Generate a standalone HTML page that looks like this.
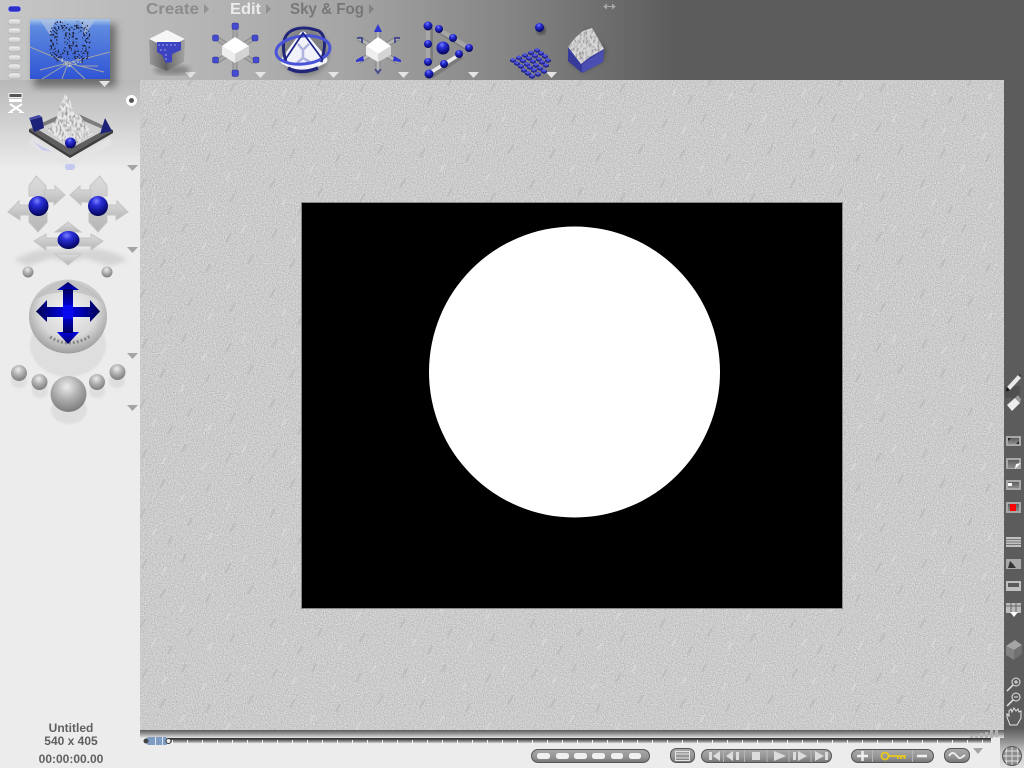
<!DOCTYPE html>
<html><head><meta charset="utf-8"><style>
html,body{margin:0;padding:0;width:1024px;height:768px;overflow:hidden;background:#ececec}
svg{position:absolute;left:0;top:0;display:block;overflow:hidden}
text{font-family:"Liberation Sans",sans-serif;font-weight:bold}
</style></head><body>
<svg width="1024" height="768" viewBox="0 0 1024 768" xmlns="http://www.w3.org/2000/svg">
<defs>
<linearGradient id="top" x1="0" x2="1" y1="0" y2="0"><stop offset="0" stop-color="#c6c6c6"/><stop offset=".2" stop-color="#b4b4b4"/><stop offset=".33" stop-color="#a6a6a6"/><stop offset=".5" stop-color="#848484"/><stop offset=".66" stop-color="#5c5c5c"/><stop offset="1" stop-color="#5c5c5c"/></linearGradient>
<linearGradient id="lt" x1="0" x2="0" y1="0" y2="1"><stop offset="0" stop-color="#b8b8b8"/><stop offset="1" stop-color="#ececec"/></linearGradient>
<linearGradient id="thumb" x1="0" x2="0" y1="0" y2="1"><stop offset="0" stop-color="#a9c7ec"/><stop offset=".12" stop-color="#5f8ae0"/><stop offset="1" stop-color="#3055d4"/></linearGradient>
<linearGradient id="pill" x1="0" x2="0" y1="0" y2="1"><stop offset="0" stop-color="#f4f4f4"/><stop offset="1" stop-color="#c4c4c4"/></linearGradient>
<linearGradient id="bshadow" x1="0" x2="0" y1="0" y2="1"><stop offset="0" stop-color="#5c5c5c"/><stop offset=".5" stop-color="#9a9a9a"/><stop offset="1" stop-color="#e4e4e4"/></linearGradient>
<linearGradient id="corner" x1="0" x2="0" y1="0" y2="1"><stop offset="0" stop-color="#5c5c5c"/><stop offset=".3" stop-color="#8c8c8c"/><stop offset=".65" stop-color="#d0d0d0"/><stop offset="1" stop-color="#e0e0e0"/></linearGradient>
<linearGradient id="track" x1="0" x2="0" y1="0" y2="1"><stop offset="0" stop-color="#2c2c2c"/><stop offset=".3" stop-color="#555"/><stop offset=".75" stop-color="#bbb"/><stop offset="1" stop-color="#fff"/></linearGradient>
<linearGradient id="btn" x1="0" x2="0" y1="0" y2="1"><stop offset="0" stop-color="#a8a8a8"/><stop offset=".6" stop-color="#949494"/><stop offset="1" stop-color="#747474"/></linearGradient>
<linearGradient id="cross" x1="0" x2="0" y1="0" y2="1"><stop offset="0" stop-color="#000060"/><stop offset=".5" stop-color="#0000f0"/><stop offset="1" stop-color="#000060"/></linearGradient>
<linearGradient id="crossH" x1="0" x2="1" y1="0" y2="0"><stop offset="0" stop-color="#000050"/><stop offset=".5" stop-color="#0000f0"/><stop offset="1" stop-color="#000050"/></linearGradient>
<linearGradient id="arrow" x1="0" x2="0" y1="0" y2="1"><stop offset="0" stop-color="#dcdcdc"/><stop offset="1" stop-color="#b6b6b6"/></linearGradient>
<linearGradient id="tile" x1="0" x2="0" y1="0" y2="1"><stop offset="0" stop-color="#5e5e5e"/><stop offset="1" stop-color="#8c8c8c"/></linearGradient>
<linearGradient id="cubeL" x1="0" x2="1" y1="0" y2="0"><stop offset="0" stop-color="#9a9a9a"/><stop offset="1" stop-color="#5e5e5e"/></linearGradient>
<linearGradient id="cubeR" x1="0" x2="1" y1="0" y2="0"><stop offset="0" stop-color="#6a6a6a"/><stop offset="1" stop-color="#a4a4a4"/></linearGradient>
<radialGradient id="bb" cx=".42" cy=".25" r=".8"><stop offset="0" stop-color="#7a80ff"/><stop offset=".3" stop-color="#2a30d8"/><stop offset=".75" stop-color="#0c0e80"/><stop offset="1" stop-color="#050540"/></radialGradient>
<radialGradient id="sb" cx=".45" cy=".3" r=".75"><stop offset="0" stop-color="#ececec"/><stop offset=".45" stop-color="#b0b0b0"/><stop offset="1" stop-color="#747474"/></radialGradient>
<radialGradient id="big" cx=".5" cy=".42" r=".62"><stop offset="0" stop-color="#f2f2f2"/><stop offset=".6" stop-color="#d8d8d8"/><stop offset=".88" stop-color="#a8a8a8"/><stop offset="1" stop-color="#8c8c8c"/></radialGradient>
<filter id="tex" x="0" y="0" width="100%" height="100%" color-interpolation-filters="sRGB"><feTurbulence type="fractalNoise" baseFrequency=".9" numOctaves="1" seed="4"/><feColorMatrix values=".35 0 0 0 .62  .35 0 0 0 .62  .35 0 0 0 .62  0 0 0 0 1"/></filter>
<pattern id="streaks" width="130" height="110" patternUnits="userSpaceOnUse">
<g stroke-width="2" fill="none" stroke="#b9b9b9">
<path d="M12 18l5-9M52 12l4-8M96 22l5-9M30 48l5-9M76 52l4-8M118 44l5-9M10 78l5-9M58 86l4-8M100 92l5-9M38 104l4-8"/>
</g>
<g stroke-width="2" fill="none" stroke="#d9d9d9">
<path d="M32 24l4-7M72 30l4-7M112 12l4-7M50 62l4-7M96 70l4-7M22 96l4-7M78 100l4-7"/>
</g>
</pattern>
<filter id="dots" x="-10%" y="-10%" width="120%" height="120%" color-interpolation-filters="sRGB"><feTurbulence type="fractalNoise" baseFrequency=".55" numOctaves="1" seed="3"/><feColorMatrix values="0 0 0 0 0  0 0 0 0 0  0 0 0 0 0  14 0 0 0 -7.500" result="m"/><feComposite in="SourceGraphic" in2="m" operator="in"/></filter>
<filter id="terr" x="0" y="0" width="100%" height="100%" color-interpolation-filters="sRGB"><feTurbulence type="fractalNoise" baseFrequency=".5 .25" numOctaves="2" seed="6"/><feColorMatrix values="0 0 0 0 .5  0 0 0 0 .5  0 0 0 0 .5  2.400 0 0 0 -1.050" result="n"/><feComposite in="n" in2="SourceAlpha" operator="in" result="c"/><feMerge><feMergeNode in="SourceGraphic"/><feMergeNode in="c"/></feMerge></filter>
<filter id="s"><feGaussianBlur stdDeviation=".35"/></filter>
<filter id="b1"><feGaussianBlur stdDeviation="1"/></filter>
<filter id="b2"><feGaussianBlur stdDeviation="2.5"/></filter>
<filter id="b4"><feGaussianBlur stdDeviation="4"/></filter>
<g id="t"><path d="M0 1.500L3 0 6 1.500V3.500L3 5 0 3.500Z" fill="#26298c"/><path d="M0 1.500L3 0 6 1.500 3 3Z" fill="#5258e4"/></g>
</defs>

<!-- base areas -->
<rect width="1024" height="768" fill="#ececec"/>
<rect width="1024" height="80" fill="url(#top)"/>
<rect x="0" y="80" width="140" height="90" fill="url(#lt)"/>
<rect x="1004" y="80" width="20" height="650" fill="#5c5c5c"/>
<rect x="1000" y="728" width="24" height="40" fill="url(#corner)"/>
<rect x="140" y="730" width="864" height="8" fill="url(#bshadow)"/>

<!-- workspace -->
<rect x="140" y="80" width="864" height="650" filter="url(#tex)"/>
<rect x="140" y="80" width="864" height="650" fill="url(#streaks)" opacity=".8"/>

<!-- canvas -->
<rect x="301.500" y="202.500" width="541" height="406" fill="#000" stroke="#888" stroke-width="1"/>
<circle cx="574.500" cy="372" r="145.500" fill="#fff"/>

<!-- top-menu -->
<g font-size="16">
<text x="146" y="14" fill="#8c8c8c" textLength="53" lengthAdjust="spacingAndGlyphs" filter="url(#s)">Create</text><path d="M204 4l5 5-5 5z" fill="#929292"/>
<text x="230" y="14" fill="#ececec" textLength="31" lengthAdjust="spacingAndGlyphs">Edit</text><path d="M266 4l5 5-5 5z" fill="#8e8e8e"/>
<text x="290" y="14" fill="#777" textLength="74" lengthAdjust="spacingAndGlyphs" filter="url(#s)">Sky &amp; Fog</text><path d="M369 4l5 5-5 5z" fill="#828282"/>
</g>
<path d="M604 6.500h11M604 6.500l2.500-2v4zM615 6.500l-2.500-2v4z" stroke="#a8a8a8" stroke-width="1" fill="#a8a8a8"/>

<!-- left pills -->
<rect x="8" y="6" width="13" height="6" rx="3" fill="#2a30c8" stroke="#dfe0ff" stroke-width=".5"/>
<g fill="url(#pill)" stroke="#999" stroke-width=".4">
<rect x="8" y="19" width="13" height="6" rx="3"/><rect x="8" y="28" width="13" height="6" rx="3"/><rect x="8" y="37" width="13" height="6" rx="3"/><rect x="8" y="46" width="13" height="6" rx="3"/><rect x="8" y="55" width="13" height="6" rx="3"/><rect x="8" y="64" width="13" height="6" rx="3"/><rect x="8" y="73" width="13" height="6" rx="3"/>
</g>

<!-- preview thumb -->
<rect x="34" y="24" width="82" height="63" fill="#444" opacity=".65" filter="url(#b4)"/>
<rect x="30" y="19" width="80" height="60" fill="url(#thumb)"/>
<path d="M40 20l10 15 5-15zM95 20l-10 15-5-15z" fill="#b4c4e0" opacity=".65"/>
<path d="M30 47L68 63 110 52M68 63L42 79M68 63L62 79M68 63L85 79M68 63L104 72M68 63L40 70M78 66L98 66" stroke="#a0a4a8" stroke-width="1" fill="none"/>
<g fill="none" filter="url(#dots)">
<ellipse cx="61" cy="42" rx="8" ry="17" stroke="#20243c" stroke-width="9"/>
<ellipse cx="80" cy="42" rx="7" ry="17" stroke="#20243c" stroke-width="9"/>
<path d="M60 60Q70 68 80 60" stroke="#c0c0c0" stroke-width="6"/>
</g>

<!-- small triangles -->
<g fill="#e4e4e4">
<path d="M99 81h11l-5.500 6z"/><path d="M185 72h11l-5.500 6z"/><path d="M255 72h11l-5.500 6z"/><path d="M328 72h11l-5.500 6z"/><path d="M398 72h11l-5.500 6z"/><path d="M468 72h11l-5.500 6z"/><path d="M546 72h11l-5.500 6z"/>
</g>
<g fill="#a4a4a4">
<path d="M127 165h11l-5.500 6z"/><path d="M127 247h11l-5.500 6z"/><path d="M127 353h11l-5.500 6z"/><path d="M127 405h11l-5.500 6z"/>
<path d="M973 748h10l-5 6z"/>
</g>

<!-- top icon 1: cube -->
<ellipse cx="172" cy="70" rx="18" ry="5" fill="#555" opacity=".5" filter="url(#b2)"/>
<g filter="url(#s)">
<path d="M149 39L167 30 185 39 167 48Z" fill="#f6f6f6"/>
<path d="M149 39L167 48V71L150 64Z" fill="url(#cubeL)"/>
<path d="M167 48L185 39 184 62 167 71Z" fill="url(#cubeR)"/>
<path d="M157 42H181V50L172 54V62L166 63 162 55 157 52Z" fill="#3c42c0"/>
<path d="M158 45h20M160 50h8M166 54v6" stroke="#8b90e0" stroke-width="1.300" stroke-dasharray="2 2"/>
</g>

<!-- top icon 2: move cube -->
<g filter="url(#s)">
<g stroke="#707070" stroke-width="5" opacity=".6"><path d="M235 26V72M216 38L254 62M254 38L216 62"/></g>
<g stroke="#a8a8a8" stroke-width="3"><path d="M235 26V72M216 38L254 62M254 38L216 62"/></g>
<path d="M222 46L235 37 249 46 235 54Z" fill="#fff"/>
<path d="M222 46L235 54V63L222 55Z" fill="#eee"/>
<path d="M249 46L235 54V63L249 55Z" fill="#d4d4d4"/>
<g fill="#454bd0" stroke="#2a2e90" stroke-width=".5">
<rect x="232" y="23" width="6.500" height="6.500" rx="1.500"/><rect x="232" y="70" width="6.500" height="6.500" rx="1.500"/><rect x="212.500" y="35" width="6" height="6" rx="1.500"/><rect x="252" y="35" width="6" height="6" rx="1.500"/><rect x="212.500" y="57" width="6" height="6" rx="1.500"/><rect x="253" y="57" width="6" height="6" rx="1.500"/>
</g>
</g>

<!-- top icon 3: orbit -->
<ellipse cx="305" cy="52" rx="24" ry="24" fill="#444" opacity=".4" filter="url(#b2)"/>
<g filter="url(#s)">
<path d="M303 35 L324 60 Q303 72 284 61Z" fill="#f2f2fa" stroke="#f2f2fa" stroke-width="7" stroke-linejoin="round"/>
<path d="M298 44l5 6 6-6M303 50v8l-6 5M303 58l7 4" stroke="#b0b4dc" stroke-width="2.500" fill="none"/>
<g fill="none">
<path d="M286 62Q279 38 291 31 302 25 319 31 329 38 321 62" stroke="#202878" stroke-width="3"/>
<path d="M288 68Q300 75 318 68" stroke="#202878" stroke-width="3.500"/>
<ellipse cx="303" cy="50" rx="27" ry="14" stroke="#4a52d8" stroke-width="3" transform="rotate(-6 303 50)"/>
<path d="M285 60L303 33 323 60" stroke="#1c2488" stroke-width="1.700"/>
</g>
</g>

<!-- top icon 4: axis arrows -->
<g filter="url(#s)">
<g stroke="#707070" stroke-width="5" opacity=".55"><path d="M378 28V70M358 38L398 62M398 38L358 62"/></g>
<g stroke="#b4b4b4" stroke-width="3"><path d="M378 28V70M358 38L398 62M398 38L358 62"/></g>
<path d="M366 46L378 37 391 46 378 54Z" fill="#fff"/>
<path d="M366 46L378 54V62L366 55Z" fill="#eee"/>
<path d="M391 46L378 54V62L391 55Z" fill="#d4d4d4"/>
<g fill="#2e36d0">
<path d="M378 24l4 8h-8z"/><path d="M356 60l7-4 1 5-8 1z"/><path d="M401 60l-7-4-1 5 8 1z"/>
</g>
<g fill="none" stroke="#4c5090" stroke-width="2">
<path d="M357 38h5v5M400 38h-5v5"/><path d="M375 69l3 4 3-4"/>
</g>
</g>

<!-- top icon 5: triangle -->
<g filter="url(#s)">
<path d="M430 28V62M440 31L471 50M431 76L461 56" stroke="#606060" stroke-width="6" opacity=".45"/>
<path d="M428 28V62" stroke="#a8a8a8" stroke-width="4.500"/>
<path d="M438 29L469 48" stroke="#a4a4a4" stroke-width="4.500"/>
<path d="M428 74L459 55" stroke="#ececec" stroke-width="3.500"/>
<g fill="url(#bb)">
<circle cx="428" cy="26" r="4.500"/><circle cx="428" cy="44" r="4"/><circle cx="428" cy="62" r="4"/>
<circle cx="439" cy="29" r="4"/><circle cx="453" cy="38" r="4"/><circle cx="469" cy="48" r="4"/>
<circle cx="459" cy="54" r="4"/><circle cx="444" cy="64" r="4"/><circle cx="429" cy="74" r="4.500"/>
<circle cx="443" cy="48" r="6.500"/>
</g>
</g>

<!-- top icon 6: sphere + blocks -->
<circle cx="541" cy="30" r="5" fill="#333" opacity=".5" filter="url(#b1)"/>
<circle cx="539.500" cy="27.500" r="4.500" fill="url(#bb)"/>
<g>
<use href="#t" x="534" y="48"/><use href="#t" x="528" y="50.500"/><use href="#t" x="538" y="51"/><use href="#t" x="522" y="53"/><use href="#t" x="532" y="53.500"/><use href="#t" x="542" y="54"/><use href="#t" x="516" y="55.500"/><use href="#t" x="526" y="56"/><use href="#t" x="536" y="57"/><use href="#t" x="510" y="58"/><use href="#t" x="545" y="58"/><use href="#t" x="520" y="58.500"/><use href="#t" x="530" y="59"/><use href="#t" x="539" y="60"/><use href="#t" x="514" y="61"/><use href="#t" x="524" y="62"/><use href="#t" x="533" y="63"/><use href="#t" x="543" y="63"/><use href="#t" x="518" y="64"/><use href="#t" x="527" y="65"/><use href="#t" x="537" y="66"/><use href="#t" x="521" y="68"/><use href="#t" x="531" y="68"/><use href="#t" x="541" y="69"/><use href="#t" x="525" y="71"/><use href="#t" x="535" y="72"/><use href="#t" x="529" y="74"/>
</g>

<!-- top icon 7: terrain block -->
<path d="M569 62L587 30 606 49 603 61 584 72Z" fill="#333" opacity=".5" filter="url(#b2)"/>
<path d="M568 47L581 62 604 49 603 62 582 73 568 61Z" fill="#363a9a"/>
<path d="M582 64L604 50 603 62 582 73Z" fill="#4a4eb0"/>
<path d="M568 47L575 38 583 31 592 28 598 38 604 49 590 57 581 64Z" fill="#d8d8d8" filter="url(#terr)"/>

<!-- chair icon -->
<g stroke="#fff" fill="none">
<rect x="9" y="93.500" width="13" height="4" fill="#555" stroke="#f2f2f2"/>
<rect x="9" y="99" width="13" height="3" fill="#fff" stroke="none"/>
<path d="M10 104L22 112M22 104L10 112" stroke-width="2"/>
<path d="M8 112.500h5M19 112.500h5" stroke-width="1"/>
</g>
<circle cx="131.500" cy="100.500" r="4" fill="#555" stroke="#fff" stroke-width="3"/>

<!-- terrain panel -->
<path d="M32 137L70 162 110 138 112 144 70 168 30 145Z" fill="#e4e4e4" filter="url(#b1)"/>
<path d="M32 140L42 150 52 152 36 143Z" fill="#c0c4f0" opacity=".8"/>
<rect x="65" y="164" width="10" height="6" rx="3" fill="#c4c8f0"/>
<g filter="url(#s)">
<path d="M29 129L70 110 113 130 70 155Z" fill="#7c7c7c"/>
<path d="M29 129L70 155 113 130 113 133 70 158 29 132Z" fill="#3c3c3c"/>
<path d="M37 129L70 115 105 130 70 149Z" fill="#cfcfcf"/>
<path d="M29 129L70 155 113 130 105 130 70 149 37 129Z" fill="#5e5e5e"/>
</g>
<path d="M46 130L56 120 60 106 65 94 70 100 74 112 79 114 86 124 93 134 70 147Z" fill="#e8e8e8" filter="url(#terr)"/>
<g filter="url(#s)">
<path d="M30 120L42 117 44 128 34 132Z" fill="#1f2477"/><path d="M42 117l-3-2-10 3 1 2z" fill="#4046a4"/>
<path d="M105 118L112 131 100 134Z" fill="#1f2477"/>
</g>
<circle cx="70.500" cy="143" r="5.500" fill="url(#bb)"/>

<!-- move panel -->
<path d="M14 260Q40 246 55 250L68 248 82 250Q105 246 128 260L110 266 84 258 68 262 52 258 28 266Z" fill="#d4d4d4" filter="url(#b2)"/>
<g fill="url(#arrow)" stroke="#c4c4c4" stroke-width="1" filter="url(#s)">
<path d="M36 176L46 186V196H29V186ZM38 232L47 222V213H29V222Z"/>
<path d="M8 212L19 201V205H30V215H20V220Z"/><path d="M65 195L55 186V190H44V202H54V205Z"/>
<path d="M100 176L107 186V196H90V186ZM98 232L107 222V213H89V222Z"/>
<path d="M128 212L117 201V205H106V215H116V220Z"/><path d="M70 195L80 186V190H91V202H81V205Z"/>
<path d="M68 222L81 232H55Z"/><path d="M68 265L81 254H55Z"/>
<path d="M34 241L46 234V238H58V246H46V250Z"/><path d="M103 241L91 234V238H78V246H91V250Z"/>
</g>
<circle cx="38.500" cy="206" r="10" fill="url(#bb)"/>
<circle cx="98" cy="206" r="10" fill="url(#bb)"/>
<ellipse cx="68.500" cy="240" rx="11" ry="9" fill="url(#bb)"/>
<circle cx="28" cy="272" r="5.500" fill="url(#sb)"/>
<circle cx="107" cy="272" r="5.500" fill="url(#sb)"/>

<!-- big sphere -->
<ellipse cx="68" cy="345" rx="38" ry="32" fill="#dedede" filter="url(#b1)"/>
<ellipse cx="68" cy="316.500" rx="39" ry="37" fill="url(#big)"/>
<path d="M34 300Q50 282 68 280 90 284 102 302 86 292 68 292 48 292 34 300Z" fill="#b0b0b0" opacity=".5"/>
<path d="M50 337Q60 343 68 343 80 343 90 336" stroke="#888" stroke-width="3" stroke-dasharray="2 2" fill="none"/>
<path d="M68 282L79 290H73V307H63V290H57Z" fill="url(#cross)"/>
<path d="M68 344L79 332H73V317H63V332H57Z" fill="url(#cross)"/>
<rect x="63" y="289" width="10" height="44" fill="url(#cross)"/>
<path d="M36 311.500L47 300V307H90V300L100 311.500 90 322V317H47V322Z" fill="url(#crossH)"/>
<rect x="63" y="305" width="10" height="14" fill="#0808f0"/>

<!-- rotate spheres -->
<g fill="#dedede" filter="url(#b1)">
<ellipse cx="19" cy="381" rx="8" ry="7"/><ellipse cx="40" cy="391" rx="8" ry="7"/><ellipse cx="97" cy="391" rx="8" ry="7"/><ellipse cx="117" cy="381" rx="8" ry="7"/><ellipse cx="69" cy="410" rx="18" ry="14"/>
</g>
<circle cx="19" cy="373" r="8" fill="url(#sb)"/>
<circle cx="39.500" cy="382" r="8" fill="url(#sb)"/>
<circle cx="97" cy="382" r="8" fill="url(#sb)"/>
<circle cx="117.500" cy="372" r="8" fill="url(#sb)"/>
<circle cx="68.500" cy="394" r="18" fill="url(#sb)"/>

<!-- info -->
<g font-size="12" fill="#606060" text-anchor="middle">
<text x="71" y="732">Untitled</text>
<text x="71" y="745">540 x 405</text>
<text x="71" y="763">00:00:00.00</text>
</g>

<!-- timeline -->
<rect x="168" y="738" width="823" height="6" fill="url(#track)"/>
<g stroke="#fff" stroke-width="1" opacity=".9"><path d="M172.500 740V744M187.500 740V744M202.500 740V744M217.500 740V744M232.500 740V744M247.500 740V744M262.500 740V744M277.500 740V744M292.500 740V744M307.500 740V744M322.500 740V744M337.500 740V744M352.500 740V744M367.500 740V744M382.500 740V744M397.500 740V744M412.500 740V744M427.500 740V744M442.500 740V744M457.500 740V744M472.500 740V744M487.500 740V744M502.500 740V744M517.500 740V744M532.500 740V744M547.500 740V744M562.500 740V744M577.500 740V744M592.500 740V744M607.500 740V744M622.500 740V744M637.500 740V744M652.500 740V744M667.500 740V744M682.500 740V744M697.500 740V744M712.500 740V744M727.500 740V744M742.500 740V744M757.500 740V744M772.500 740V744M787.500 740V744M802.500 740V744M817.500 740V744M832.500 740V744M847.500 740V744M862.500 740V744M877.500 740V744M892.500 740V744M907.500 740V744M922.500 740V744M937.500 740V744M952.500 740V744M967.500 740V744M982.500 740V744"/></g>
<rect x="146" y="737" width="22" height="8" rx="3" fill="#7f9cc4"/>
<path d="M155.500 737v8M162.500 737v8" stroke="#dfe6f0"/>
<circle cx="146" cy="741" r="2.500" fill="#444"/>
<circle cx="168.500" cy="741" r="2.500" fill="#eee" stroke="#333"/>
<g fill="#b0b0b0">
<rect x="970" y="735" width="3" height="3"/><rect x="975" y="734" width="3" height="4"/><rect x="980" y="733" width="3" height="5"/><rect x="985" y="732" width="3" height="6"/><rect x="990" y="730" width="3" height="8"/><rect x="995" y="730" width="3" height="7"/>
</g>

<!-- transport -->
<g stroke="#555" stroke-width="1" fill="url(#btn)">
<rect x="531.500" y="749.500" width="118" height="13" rx="6.500"/>
<rect x="670.500" y="748.500" width="24" height="14" rx="6"/>
<rect x="701.500" y="749.500" width="130" height="13" rx="6.500"/>
<rect x="851.500" y="749.500" width="82" height="13" rx="6.500"/>
<rect x="944.500" y="748.500" width="25" height="14" rx="6.500"/>
</g>
<g fill="#f0f0f0" filter="url(#s)">
<rect x="537" y="753" width="13" height="6" rx="2.500"/><rect x="556" y="753" width="13" height="6" rx="2.500"/><rect x="574" y="753" width="13" height="6" rx="2.500"/><rect x="592" y="753" width="13" height="6" rx="2.500"/><rect x="611" y="753" width="12" height="6" rx="2.500"/><rect x="629" y="753" width="12" height="6" rx="2.500"/>
</g>
<path d="M675.500 751.500h14v9h-14zM675.500 754h14M675.500 758h14" stroke="#e4e4e4" fill="none"/>
<path d="M723.500 750v12M744.500 750v12M767 750v12M789 750v12M811 750v12" stroke="#b4b4b4"/>
<g fill="#dcdcdc">
<path d="M709 752h3v8h-3zM720 751v10l-7-5z"/>
<path d="M733 751v10l-7-5zM736 752h3v8h-3z"/>
<rect x="752" y="752" width="8" height="8"/>
<path d="M774 751l12 5-12 5z"/>
<path d="M793 752h3v8h-3zM798 751l9 5-9 5z"/>
<path d="M815 751l9 5-9 5zM825 752h3v8h-3z"/>
</g>
<path d="M872.500 750v12M912.500 750v12" stroke="#b4b4b4"/>
<path d="M857 756h11M862.500 751v10" stroke="#f0f0f0" stroke-width="2.500"/>
<path d="M917 756h10" stroke="#f0f0f0" stroke-width="2.500"/>
<circle cx="885" cy="756" r="3.500" fill="none" stroke="#e8c81c" stroke-width="1.800"/>
<path d="M888 756h18M898 756v3M901 756v3M904.500 756v3" stroke="#e8c81c" stroke-width="1.800" fill="none"/>
<path d="M949 756q3-5 6-2t4 4 6-3" stroke="#f0f0f0" stroke-width="1.800" fill="none"/>

<!-- globe -->
<circle cx="1012" cy="756" r="9.500" fill="#8c8c8c" stroke="#555"/>
<path d="M1003 756h18M1005 751h14M1005 761h14M1012 747v18M1007 748q-2 8 0 16M1017 748q2 8 0 16" stroke="#e0e0e0" fill="none" stroke-width=".9"/>

<!-- right tools -->
<rect x="1005" y="386" width="15" height="12" fill="#4a4a4a" opacity=".7"/>
<path d="M1007 387L1018 375 1021 378 1010 390Z" fill="#e8e8e8"/><path d="M1007 387l3 3-4 1.500z" fill="#111"/><path d="M1018 375l1.500-1.500 2 2-1.500 1.500z" fill="#444"/>
<path d="M1007 405L1015 398 1020 403 1012 411Z" fill="#eee"/><path d="M1015 398L1018 395 1021 399 1020 403Z" fill="#999"/>
<rect x="1006" y="436" width="15" height="10" fill="#a8a8a8"/><rect x="1008" y="438" width="11" height="6" fill="url(#tile)"/><path d="M1008 438l3 0-3 3zM1019 444l-3 0 3-3z" fill="#222"/>
<rect x="1006" y="458" width="15" height="11" fill="#a8a8a8"/><path d="M1008 460h11v4l-5 4h-6z" fill="url(#tile)"/><path d="M1021 463l-6 6 1-5z" fill="#fff"/>
<rect x="1006" y="480" width="15" height="10" fill="#a8a8a8"/><rect x="1008" y="482" width="11" height="6" fill="url(#tile)"/><rect x="1008" y="483" width="4" height="3" fill="#fff"/>
<rect x="1006" y="502" width="15" height="11" fill="#a8a8a8"/><rect x="1008" y="504" width="11" height="7" fill="url(#tile)"/><rect x="1010" y="504" width="6" height="7" fill="#f00"/>
<rect x="1006" y="537" width="15" height="10" fill="#c0c0c0"/><path d="M1006 539.500h15M1006 542h15M1006 544.500h15" stroke="#777"/>
<rect x="1006" y="559" width="15" height="10" fill="#a8a8a8"/><path d="M1008 568l2-7 3 3 3 4z" fill="#333"/>
<rect x="1006" y="581" width="15" height="10" fill="#c0c0c0"/><rect x="1008" y="583" width="11" height="4" fill="#5c5c5c"/>
<rect x="1006" y="603" width="15" height="10" fill="#bcbcbc"/><path d="M1006 606h15M1011 603v10M1016 603v10" stroke="#666"/><path d="M1010 612h8l-4 5z" fill="#fff"/>
<path d="M1006 646L1015 640 1022 645 1014 650Z" fill="#a4a4a4"/><path d="M1006 646L1014 650V660L1006 655Z" fill="#828282"/><path d="M1014 650V660L1022 654V645Z" fill="#707070"/>
<g fill="none" stroke="#e4e4e4">
<circle cx="1016" cy="682" r="4" stroke-width="1"/><path d="M1013 685L1007 691" stroke-width="1.500"/><path d="M1014 682h4M1016 680v4" stroke-width="1"/>
<circle cx="1016" cy="697" r="4" stroke-width="1"/><path d="M1013 700L1007 706" stroke-width="1.500"/><path d="M1014 697h4" stroke-width="1"/>
<path d="M1010 725L1007 717V714L1009 716V711L1011 709 1012 712 1014 708 1016 711 1018 709 1019 712 1021 711 1021 718 1017 725Z" stroke-width="1"/>
</g>
</svg>
</body></html>
